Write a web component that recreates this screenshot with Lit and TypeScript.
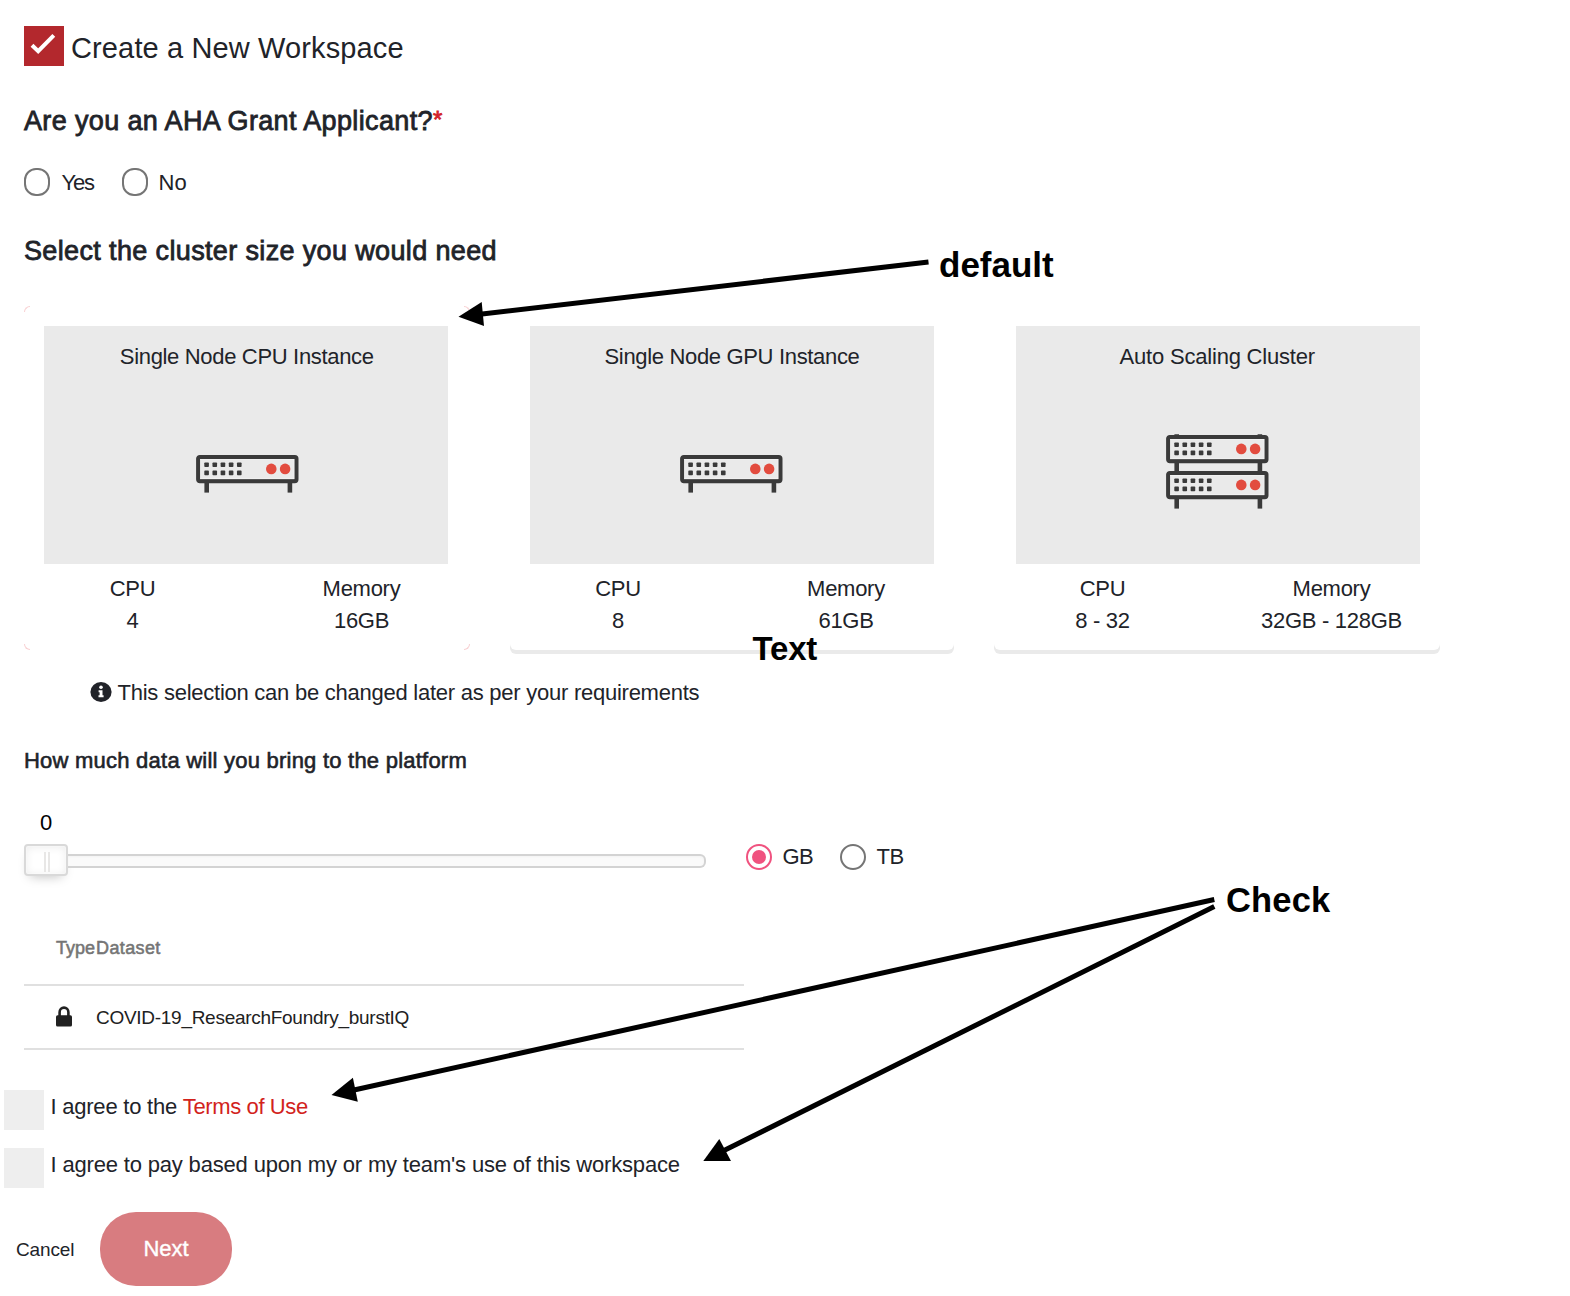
import { LitElement, html, svg, css } from "lit";
import { customElement, property } from "lit/decorators.js";

@customElement("server-icon")
export class ServerIcon extends LitElement {
  @property({ type: Number }) units = 1;

  static styles = css`
    :host { display: block; line-height: 0; }
    svg { display: block; overflow: visible; }
  `;

  private unit(y: number) {
    const dots = [];
    for (const cy of [9.8, 17.9]) {
      for (let i = 0; i < 5; i++) {
        dots.push(svg`<rect x=${8.3 + i * 8.17} y=${cy - 2.3} width="4.6" height="4.6" rx="0.8" fill="#3a3a3a" />`);
      }
    }
    return svg`
      <g transform="translate(0 ${y})">
        <rect x="2.2" y="2" width="98.2" height="24.2" rx="1.6" fill="#eaeaea" stroke="#3a3a3a" stroke-width="4.2" />
        <rect x="4.6" y="4.4" width="93.4" height="19.4" fill="none" stroke="#f4f4f4" stroke-width="0.7" />
        ${dots}
        <circle cx="75.3" cy="13.9" r="5.3" fill="#e24c3f" />
        <circle cx="89.1" cy="13.9" r="5.3" fill="#e24c3f" />
        <rect x="8.4" y="28" width="4.6" height="9.6" fill="#3a3a3a" />
        <rect x="91.6" y="28" width="4.6" height="9.6" fill="#3a3a3a" />
      </g>`;
  }

  render() {
    const h = 38 + (this.units - 1) * 36;
    const stubs = this.units > 1
      ? svg`<path d="M8.4 -0.8h4.6v2h-4.6zM91.6 -0.8h4.6v2h-4.6z" fill="#3a3a3a" />`
      : null;
    return html`<svg width="103" height=${h} viewBox="0 0 103 ${h}">
      ${stubs}${Array.from({ length: this.units }, (_, i) => this.unit(i * 36))}
    </svg>`;
  }
}

interface Cluster {
  name: string;
  kind: string;
  units: number;
  cpu: string;
  memory: string;
}

const CLUSTERS: Cluster[] = [
  { name: "Single Node CPU Instance", kind: "selected", units: 1, cpu: "4", memory: "16GB" },
  { name: "Single Node GPU Instance", kind: "middle", units: 1, cpu: "8", memory: "61GB" },
  { name: "Auto Scaling Cluster", kind: "last", units: 2, cpu: "8 - 32", memory: "32GB - 128GB" },
];

@customElement("app-root")
export class AppRoot extends LitElement {
  static styles = css`
    :host {
      display: block;
      position: relative;
      width: 1570px;
      height: 1296px;
      overflow: hidden;
      background: #fff;
      color: #212329;
      font-family: "Liberation Sans", Arial, sans-serif;
      font-size: 22px;
      line-height: 30px;
      letter-spacing: -0.28px;
      white-space: nowrap;
    }
    * { box-sizing: border-box; }
    .page { display: flex; flex-direction: column; padding: 26px 0 0 24px; }
    .medium { -webkit-text-stroke: 0.8px currentColor; }

    .title-row { display: flex; height: 40px; }
    .tick { width: 40px; height: 40px; background: #b3282d; }
    .tick svg { display: block; }
    .title { margin: 7px 0 0 7px; font-size: 29px; letter-spacing: 0.13px; line-height: 30px; }

    .heading { margin-top: 40px; height: 30px; font-size: 27px; letter-spacing: 0.36px; }
    .star { color: #d3222a; font-size: 24px; -webkit-text-stroke: 0.8px currentColor; position: relative; top: -2px; }

    .radios { display: flex; align-items: center; height: 28px; }
    .applicant { margin-top: 32px; }
    .radio { width: 26px; height: 28px; border: 2px solid #757575; border-radius: 12px; background: #fff; }
    .applicant span { padding-top: 1px; }
    .yes { width: 72px; padding-left: 11.5px; letter-spacing: -1.2px; }
    .no { padding-left: 10.5px; letter-spacing: 0; }

    .cards { display: grid; grid-template-columns: 446px 444px 446px; column-gap: 40px; margin-top: 40px; height: 344px; }
    .card { border-radius: 6px; padding: 20px 0 0 20px; box-shadow: 0 4px 0 #eaeaea; background: #fff; }
    .card.last { padding-left: 22px; }
    .corner-frame { grid-area: 1 / 1; display: flex; flex-direction: column; justify-content: space-between; height: 344px; }
    .corner-pair { display: flex; justify-content: space-between; }
    .corner { width: 6px; height: 6px; border: 0 solid #f8d0d2; }
    .tl { border-top-width: 1px; border-left-width: 1px; border-top-left-radius: 6px; }
    .tr { border-top-width: 1px; border-right-width: 1px; border-top-right-radius: 6px; }
    .bl { border-bottom-width: 1px; border-left-width: 1px; border-bottom-left-radius: 6px; }
    .br { border-bottom-width: 1px; border-right-width: 1px; border-bottom-right-radius: 6px; }
    .card.selected { grid-area: 1 / 1; box-shadow: none; background: none; }
    .card.middle { grid-area: 1 / 2; }
    .card.last { grid-area: 1 / 3; }
    .panel { display: flex; flex-direction: column; align-items: center; width: 404px; height: 238px; background: #eaeaea; }
    .name { margin-top: 16px; height: 30px; letter-spacing: -0.33px; }
    .selected .name { padding-left: 1.5px; }
    .last .name { letter-spacing: -0.2px; padding-right: 1.5px; }
    .icon { margin-top: 82.6px; }
    .selected .icon { padding-left: 2.6px; }
    .middle .icon { padding-right: 1.6px; }
    .last .icon { margin-top: 62.6px; padding-right: 1.6px; }
    .specs { display: grid; grid-template-columns: 1fr 1fr; margin: 9px -6px 0 -26px; text-align: center; line-height: 32px; }
    .last .specs { margin-left: -28px; }

    .note { display: flex; align-items: center; height: 30px; margin-top: 27px; padding-left: 66px; }
    .note svg { display: block; margin-right: 5.5px; }
    .note span { padding-top: 2px; letter-spacing: -0.25px; }
    .question { height: 30px; margin-top: 39px; letter-spacing: 0.23px; -webkit-text-stroke-width: 0.6px; }
    .value { height: 30px; width: 44px; margin-top: 32px; text-align: center; color: #000; }
    .amount { display: flex; margin-top: 6px; height: 32px; }
    .slider { display: flex; width: 682px; height: 32px; }
    .handle { display: flex; justify-content: center; gap: 2px; width: 44px; height: 32px; padding: 6px 0 0 2px; border: 2px solid #d9d9d9; border-radius: 4px; background: #fff; box-shadow: inset 0 0 2px #fff, inset 0 1px 8px #ebebeb, 0 6px 12px -6px #bbb; }
    .grip { width: 2px; height: 20px; background: #e8e7e6; }
    .track { flex: 1; height: 14px; margin-top: 10px; border: 2px solid #d3d3d3; border-left: 0; border-radius: 0 6px 6px 0; background: #fafafa; box-shadow: inset 0 1px 2px #f3f3f3; }
    .units { height: 26px; margin-left: 39.5px; }
    .units .radio { height: 26px; border-radius: 13px; }
    .radio.on { display: flex; align-items: center; justify-content: center; border-color: #f0527f; }
    .radio.on::after { content: ""; width: 14px; height: 14px; border-radius: 50%; background: #f0527f; }
    .units span { letter-spacing: -0.5px; }
    .gb { width: 68px; padding-left: 11px; }
    .tb { padding-left: 11px; }

    .table { width: 720px; margin-top: 36px; letter-spacing: -0.28px; }
    .row { display: grid; grid-template-columns: 40px 1fr; align-items: center; padding-left: 32px; border-bottom: 2px solid #e0e0e0; }
    .row.head { height: 74px; font-size: 18px; color: #757575; -webkit-text-stroke: 0.55px currentColor; letter-spacing: 0; }
    .row.head .dataset { letter-spacing: 0.38px; }
    .row.item { height: 64px; font-size: 19px; color: #212121; }
    .row.item span { padding-top: 2px; }
    .row svg { display: block; }

    .agree { display: flex; align-items: center; height: 40px; margin: 18px 0 0 -20px; letter-spacing: -0.17px; }
    .agree.first { margin-top: 40px; letter-spacing: -0.23px; }
    .box { width: 40px; height: 40px; margin-right: 6.5px; background: #eee; }
    .agree span { height: 30px; margin-top: -7px; }
    .terms { color: #d2231c; letter-spacing: -0.38px; }

    .actions { display: flex; align-items: center; height: 74px; margin: 24px 0 0 -8px; }
    .cancel { width: 84px; padding-top: 2px; font-size: 19px; letter-spacing: -0.15px; }
    .next { display: flex; align-items: center; justify-content: center; width: 132px; height: 74px; border-radius: 36px; background: #d87c80; color: #fff; letter-spacing: 0; -webkit-text-stroke: 0.4px #fff; }

    .arrows { position: absolute; left: 0; top: 0; }
    .callout { position: absolute; color: #000; font-weight: 700; line-height: 40px; }
    .c-default { left: 939px; top: 245px; font-size: 35px; letter-spacing: 0; }
    .c-text { left: 752.5px; top: 629px; font-size: 33px; letter-spacing: -0.2px; }
    .c-check { left: 1226px; top: 880px; font-size: 34.5px; letter-spacing: 0.15px; }
  `;

  private card(c: Cluster) {
    return html`
      <div class="card ${c.kind}">
        <div class="panel">
          <div class="name">${c.name}</div>
          <div class="icon"><server-icon .units=${c.units}></server-icon></div>
        </div>
        <div class="specs">
          <span>CPU</span><span>Memory</span>
          <span>${c.cpu}</span><span>${c.memory}</span>
        </div>
      </div>`;
  }

  render() {
    return html`
      <div class="page">
        <div class="title-row">
          <div class="tick">
            <svg width="40" height="40" viewBox="0 0 40 40">
              <path d="M8 19.2L14.2 25.2L29.8 9.4" fill="none" stroke="#fff" stroke-width="4" />
            </svg>
          </div>
          <div class="title">Create a New Workspace</div>
        </div>

        <div class="heading medium">Are you an AHA Grant Applicant?<span class="star">*</span></div>
        <div class="radios applicant">
          <div class="radio"></div><span class="yes">Yes</span>
          <div class="radio"></div><span class="no">No</span>
        </div>

        <div class="heading medium">Select the cluster size you would need</div>
        <div class="cards">
          <div class="corner-frame">
            <div class="corner-pair"><i class="corner tl"></i><i class="corner tr"></i></div>
            <div class="corner-pair"><i class="corner bl"></i><i class="corner br"></i></div>
          </div>
          ${CLUSTERS.map((c) => this.card(c))}
        </div>

        <div class="note">
          <svg width="22" height="20" viewBox="0 0 22 20">
            <ellipse cx="11" cy="10" rx="10.6" ry="9.9" fill="#212329" />
            <circle cx="11" cy="5.3" r="1.8" fill="#fff" />
            <path d="M8.6 8.2H12.5V13.2H13.6V15.2H8.5V13.2H9.6V10.2H8.6Z" fill="#fff" />
          </svg>
          <span>This selection can be changed later as per your requirements</span>
        </div>

        <div class="question medium">How much data will you bring to the platform</div>
        <div class="value">0</div>
        <div class="amount">
          <div class="slider">
            <div class="handle"><i class="grip"></i><i class="grip"></i></div>
            <div class="track"></div>
          </div>
          <div class="radios units">
            <div class="radio on"></div><span class="gb">GB</span>
            <div class="radio"></div><span class="tb">TB</span>
          </div>
        </div>

        <div class="table">
          <div class="row head"><span>Type</span><span class="dataset">Dataset</span></div>
          <div class="row item">
            <svg width="16" height="22" viewBox="0 0 16 22">
              <path d="M3.6 11V6.2A4.4 4.6 0 0 1 12.4 6.2V11" fill="none" stroke="#212121" stroke-width="2.6" />
              <rect x="0" y="9.2" width="16" height="11.4" rx="1.6" fill="#212121" />
            </svg>
            <span>COVID-19_ResearchFoundry_burstIQ</span>
          </div>
        </div>

        <div class="agree first">
          <div class="box"></div><span>I agree to the <a class="terms">Terms of Use</a></span>
        </div>
        <div class="agree">
          <div class="box"></div><span>I agree to pay based upon my or my team's use of this workspace</span>
        </div>

        <div class="actions">
          <span class="cancel">Cancel</span>
          <div class="next">Next</div>
        </div>
      </div>

      <svg class="arrows" width="1570" height="1296" viewBox="0 0 1570 1296">
        <g stroke="#000" stroke-width="5">
          <path d="M928.5 262L480 314.2" />
          <path d="M1214.3 899.5L354 1090" />
          <path d="M1214.3 906.5L723 1151" />
        </g>
        <path d="M458.5 316.7L481.7 302L484 326Z" />
        <path d="M331.5 1095L352.9 1077.7L357.8 1101.7Z" />
        <path d="M703.3 1161L719.3 1139L731 1161Z" />
      </svg>
      <div class="callout c-default">default</div>
      <div class="callout c-text">Text</div>
      <div class="callout c-check">Check</div>
    `;
  }
}
